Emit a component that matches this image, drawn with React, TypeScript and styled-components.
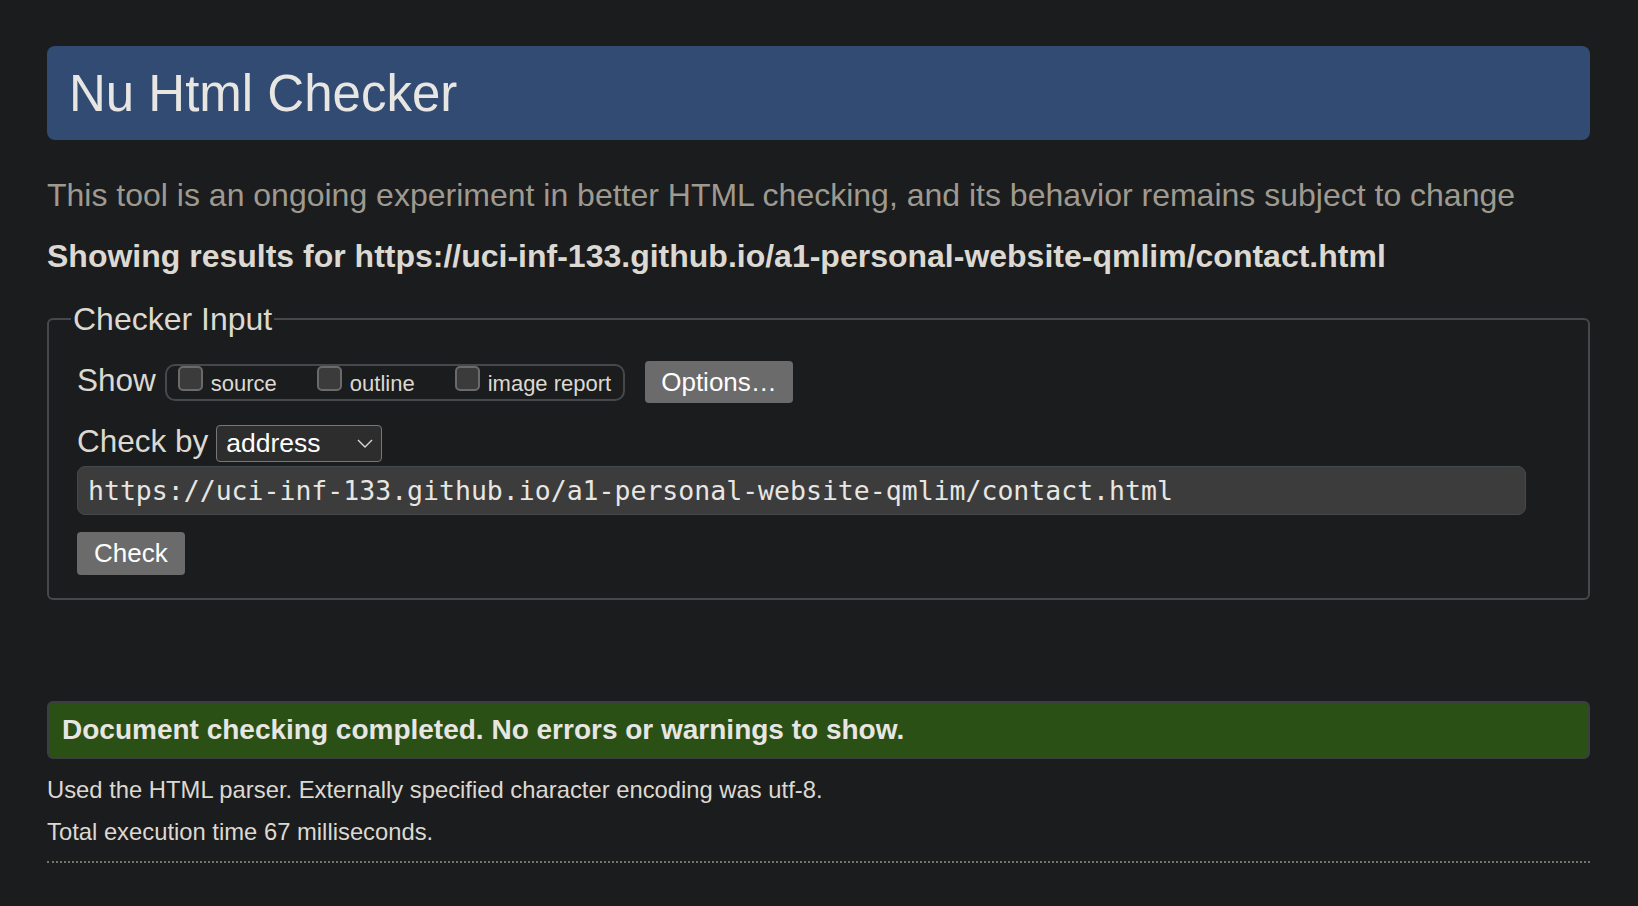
import React from "react";
import styled, { createGlobalStyle } from "styled-components";

const GlobalStyle = createGlobalStyle`
  html, body {
    margin: 0;
    padding: 0;
    background: #1b1c1e;
  }
  body {
    font-family: "Liberation Sans", Arial, Helvetica, sans-serif;
    color: #e8e6e3;
  }
`;

const Page = styled.div`
  min-height: 906px;
  padding: 46px 48px 40px 47px;
  box-sizing: border-box;
`;

const Header = styled.header`
  background: #324b73;
  border-radius: 8px;
  padding: 19px 22px 18px;
`;

const Title = styled.h1`
  margin: 0;
  font-size: 51px;
  line-height: 57px;
  font-weight: 400;
  color: #e8e6e3;
`;

const Intro = styled.p`
  margin: 37px 0 0;
  font-size: 32px;
  line-height: 36px;
  color: #9f9a90;
`;

const Target = styled.p`
  margin: 25px 0 0;
  font-size: 32px;
  line-height: 36px;
  font-weight: 700;
  color: #dcd9d2;
`;

const Fieldset = styled.fieldset`
  margin: 27px 0 0;
  padding: 24px 28px 23px;
  border: 2px solid #46494b;
  border-radius: 6px;
  min-width: 0;
`;

const Legend = styled.legend`
  font-size: 32px;
  line-height: 36px;
  padding: 0 2px;
  margin-left: -6px;
  color: #dcd9d2;
`;

const Row = styled.div<{ gap?: number }>`
  display: flex;
  align-items: baseline;
  margin-top: ${(p) => p.gap ?? 0}px;
`;

const Label = styled.span`
  font-size: 31.5px;
  line-height: 36px;
  color: #dcd9d2;
  margin-right: 9px;
`;

const Group = styled.div`
  display: flex;
  align-items: baseline;
  height: 37px;
  box-sizing: border-box;
  padding: 0 12px 0 11px;
  border: 2px solid #46494b;
  border-radius: 10px;
`;

const Option = styled.label<{ last?: boolean }>`
  display: flex;
  align-items: baseline;
  font-size: 22px;
  line-height: 25px;
  color: #dcd9d2;
  margin-right: ${(p) => (p.last ? 0 : 40)}px;
`;

const Box = styled.span`
  display: inline-block;
  width: 25px;
  height: 25px;
  box-sizing: border-box;
  border: 2px solid #6a6a6a;
  border-radius: 5px;
  background: #3b3b3b;
  margin-right: 8px;
`;

const Button = styled.button`
  height: 42px;
  padding: 0 16px;
  border: none;
  border-radius: 4px;
  background: #6b6b6b;
  color: #ffffff;
  font-family: "Liberation Sans", Arial, sans-serif;
  font-size: 26px;
  line-height: 42px;
`;

const OptionsButton = styled(Button)`
  margin-left: 20px;
`;

const CheckButton = styled(Button)`
  display: block;
  height: 43px;
  line-height: 43px;
  padding: 0 17px;
  margin-top: 17px;
`;

const Select = styled.div`
  display: inline-flex;
  align-items: baseline;
  justify-content: space-between;
  width: 166px;
  height: 37px;
  box-sizing: border-box;
  padding: 2px 8px 0 9px;
  border: 1px solid #777777;
  border-radius: 4px;
  background: #2d2d2d;
  font-size: 26.5px;
  line-height: 30px;
  color: #ffffff;
  margin-left: -1px;
`;

const Chevron = styled.svg`
  align-self: center;
  margin-top: -2px;
`;

const UrlInput = styled.div`
  width: 1449px;
  height: 49px;
  box-sizing: border-box;
  margin-top: 4px;
  padding: 0 10px;
  border: 1px solid #46494b;
  border-radius: 8px;
  background: #3c3c3c;
  font-family: "DejaVu Sans Mono", "Liberation Mono", monospace;
  font-size: 26.5px;
  line-height: 47px;
  color: #e8e6e3;
  white-space: nowrap;
`;

const Success = styled.div`
  margin-top: 101px;
  height: 58px;
  box-sizing: border-box;
  padding: 0 13px;
  border: 2px solid #3b3f42;
  border-radius: 6px;
  background: #2a5015;
  font-size: 28px;
  font-weight: 700;
  line-height: 54px;
  color: #e8e6e3;
`;

const Note = styled.p<{ gap: number }>`
  margin: ${(p) => p.gap}px 0 0;
  font-size: 23.8px;
  line-height: 28px;
  color: #dcd9d2;
`;

const Divider = styled.hr`
  margin: 15px 0 0;
  border: none;
  border-top: 2px dotted #77736b;
  height: 0;
`;

const url = "https://uci-inf-133.github.io/a1-personal-website-qmlim/contact.html";

export default function App() {
  return (
    <>
      <GlobalStyle />
      <Page>
        <Header>
          <Title>Nu Html Checker</Title>
        </Header>
        <Intro>
          This tool is an ongoing experiment in better HTML checking, and its behavior remains subject to change
        </Intro>
        <Target>Showing results for {url}</Target>

        <Fieldset>
          <Legend>Checker Input</Legend>
          <Row>
            <Label>Show</Label>
            <Group>
              <Option>
                <Box />
                source
              </Option>
              <Option>
                <Box />
                outline
              </Option>
              <Option last>
                <Box />
                image report
              </Option>
            </Group>
            <OptionsButton>Options…</OptionsButton>
          </Row>
          <Row gap={20}>
            <Label>Check by</Label>
            <Select>
              address
              <Chevron width="16" height="9" viewBox="0 0 16 9">
                <polyline points="1,1 8,8 15,1" fill="none" stroke="#d8d8d8" strokeWidth="1.4" />
              </Chevron>
            </Select>
          </Row>
          <UrlInput>{url}</UrlInput>
          <CheckButton>Check</CheckButton>
        </Fieldset>

        <Success>Document checking completed. No errors or warnings to show.</Success>
        <Note gap={17}>Used the HTML parser. Externally specified character encoding was utf-8.</Note>
        <Note gap={14}>Total execution time 67 milliseconds.</Note>
        <Divider />
      </Page>
    </>
  );
}
